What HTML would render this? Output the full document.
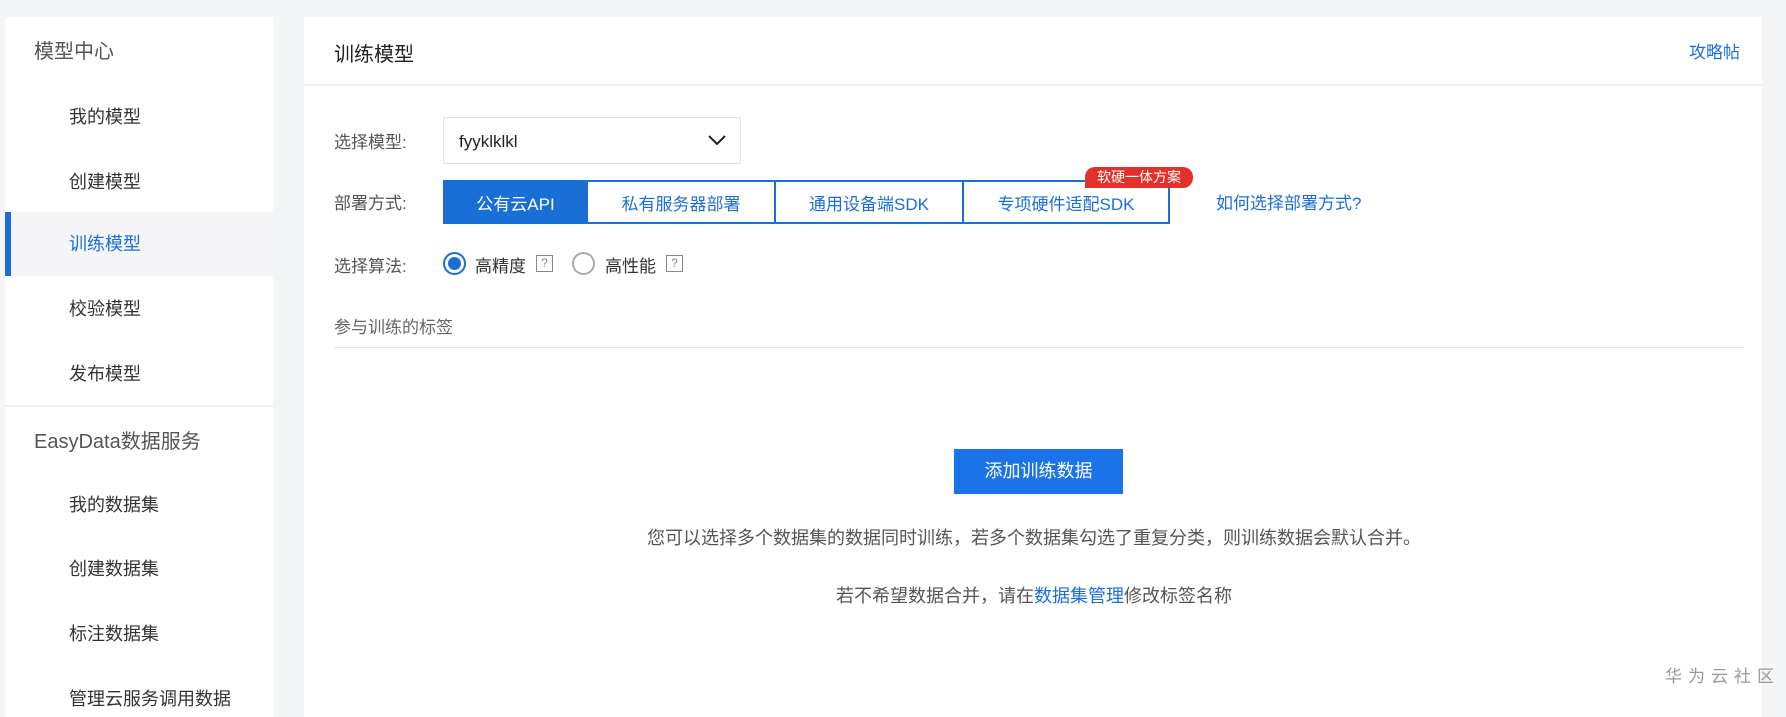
<!DOCTYPE html>
<html><head><meta charset="utf-8"><style>
*{margin:0;padding:0;box-sizing:border-box}
body{width:1786px;height:698px;background:#f4f5f7;font-family:"Liberation Sans","Noto Sans CJK SC",sans-serif;position:relative;overflow:hidden;color:#333}
.abs{position:absolute;white-space:nowrap}
#side{position:absolute;left:5px;top:17px;width:268px;height:700px;background:#fff}
.mi{position:absolute;left:64px;font-size:18px;color:#333;line-height:24px}
#main{position:absolute;left:304px;top:17px;width:1458px;height:700px;background:#fff}
.lbl{font-size:17px;color:#555}
.btn{position:absolute;top:180px;height:44px;border:2px solid #1a6fd6;border-left:none;color:#1a6fd6;font-size:17px;display:flex;align-items:center;justify-content:center;background:#fff}
</style></head><body>
<div id="side">
 <div class="abs" style="left:29px;top:18px;font-size:20px;color:#555">模型中心</div>
 <div class="mi" style="top:88px">我的模型</div>
 <div class="mi" style="top:153px">创建模型</div>
 <div style="position:absolute;left:0;top:195px;width:268px;height:64px;background:#f5f5f7;border-left:6px solid #1a6fd6"></div>
 <div class="mi" style="top:215px;color:#1a6fd6">训练模型</div>
 <div class="mi" style="top:280px">校验模型</div>
 <div class="mi" style="top:345px">发布模型</div>
 <div style="position:absolute;left:0;top:388px;width:268px;height:2px;background:#eef0f3"></div>
 <div class="abs" style="left:29px;top:408px;font-size:20px;color:#555">EasyData数据服务</div>
 <div class="mi" style="top:476px">我的数据集</div>
 <div class="mi" style="top:540px">创建数据集</div>
 <div class="mi" style="top:605px">标注数据集</div>
 <div class="mi" style="top:670px">管理云服务调用数据</div>
</div>
<div id="main">
 <div class="abs" style="left:30px;top:21px;font-size:20px;color:#222">训练模型</div>
 <div class="abs" style="left:1385px;top:21px;font-size:17px;color:#1a6fd6">攻略帖</div>
 <div style="position:absolute;left:0;top:67px;width:1458px;height:2px;background:#eef0f3"></div>
 <div class="abs lbl" style="left:30px;top:111px">选择模型:</div>
 <div style="position:absolute;left:139px;top:100px;width:298px;height:47px;border:1px solid #e3e3e3"></div>
 <div class="abs" style="left:155px;top:115px;font-size:17px;color:#222">fyyklklkl</div>
 <svg class="abs" style="left:404px;top:117px" width="18" height="12" viewBox="0 0 18 12"><path d="M1 2 L9 10 L17 2" fill="none" stroke="#222" stroke-width="2"/></svg>
 <div class="abs lbl" style="left:30px;top:172px">部署方式:</div>
</div>
<div class="btn" style="left:443px;width:145px;background:#1a6fd6;color:#fff;border-left:2px solid #1a6fd6">公有云API</div>
<div class="btn" style="left:588px;width:188px">私有服务器部署</div>
<div class="btn" style="left:776px;width:188px">通用设备端SDK</div>
<div class="btn" style="left:964px;width:206px">专项硬件适配SDK</div>
<div class="abs" style="left:1085px;top:167px;width:108px;height:21px;background:#e2302b;border-radius:10px 10px 10px 0;color:#fff;font-size:14px;line-height:21px;text-align:center">软硬一体方案</div>
<div class="abs" style="left:1216px;top:189px;font-size:17px;color:#1a6fd6">如何选择部署方式?</div>
<div class="abs lbl" style="left:334px;top:252px">选择算法:</div>
<div class="abs" style="left:443px;top:252px;width:23px;height:23px;border:2px solid #1a6fd6;border-radius:50%"><div style="margin:3px;width:13px;height:13px;border-radius:50%;background:#1a6fd6"></div></div>
<div class="abs" style="left:475px;top:252px;font-size:17px;color:#333">高精度</div>
<div class="abs" style="left:536px;top:255px;width:17px;height:17px;border:1px solid #888;font-size:12px;line-height:15px;text-align:center;color:#888">?</div>
<div class="abs" style="left:572px;top:252px;width:23px;height:23px;border:2px solid #aaa;border-radius:50%"></div>
<div class="abs" style="left:605px;top:252px;font-size:17px;color:#333">高性能</div>
<div class="abs" style="left:666px;top:255px;width:17px;height:17px;border:1px solid #888;font-size:12px;line-height:15px;text-align:center;color:#888">?</div>
<div class="abs" style="left:334px;top:313px;font-size:17px;color:#666">参与训练的标签</div>
<div class="abs" style="left:334px;top:347px;width:1410px;height:1px;background:#e6e6e6"></div>
<div class="abs" style="left:954px;top:449px;width:169px;height:45px;background:#1a73e8;color:#fff;font-size:18px;line-height:45px;text-align:center">添加训练数据</div>
<div class="abs" style="left:0;width:2068px;top:524px;font-size:18px;color:#555;text-align:center">您可以选择多个数据集的数据同时训练，若多个数据集勾选了重复分类，则训练数据会默认合并。</div>
<div class="abs" style="left:0;width:2068px;top:582px;font-size:18px;color:#555;text-align:center">若不希望数据合并，请在<span style="color:#1a6fd6">数据集管理</span>修改标签名称</div>
<div class="abs" style="left:1665px;top:662px;font-size:17px;color:#999;letter-spacing:6px">华为云社区</div>
</body></html>
